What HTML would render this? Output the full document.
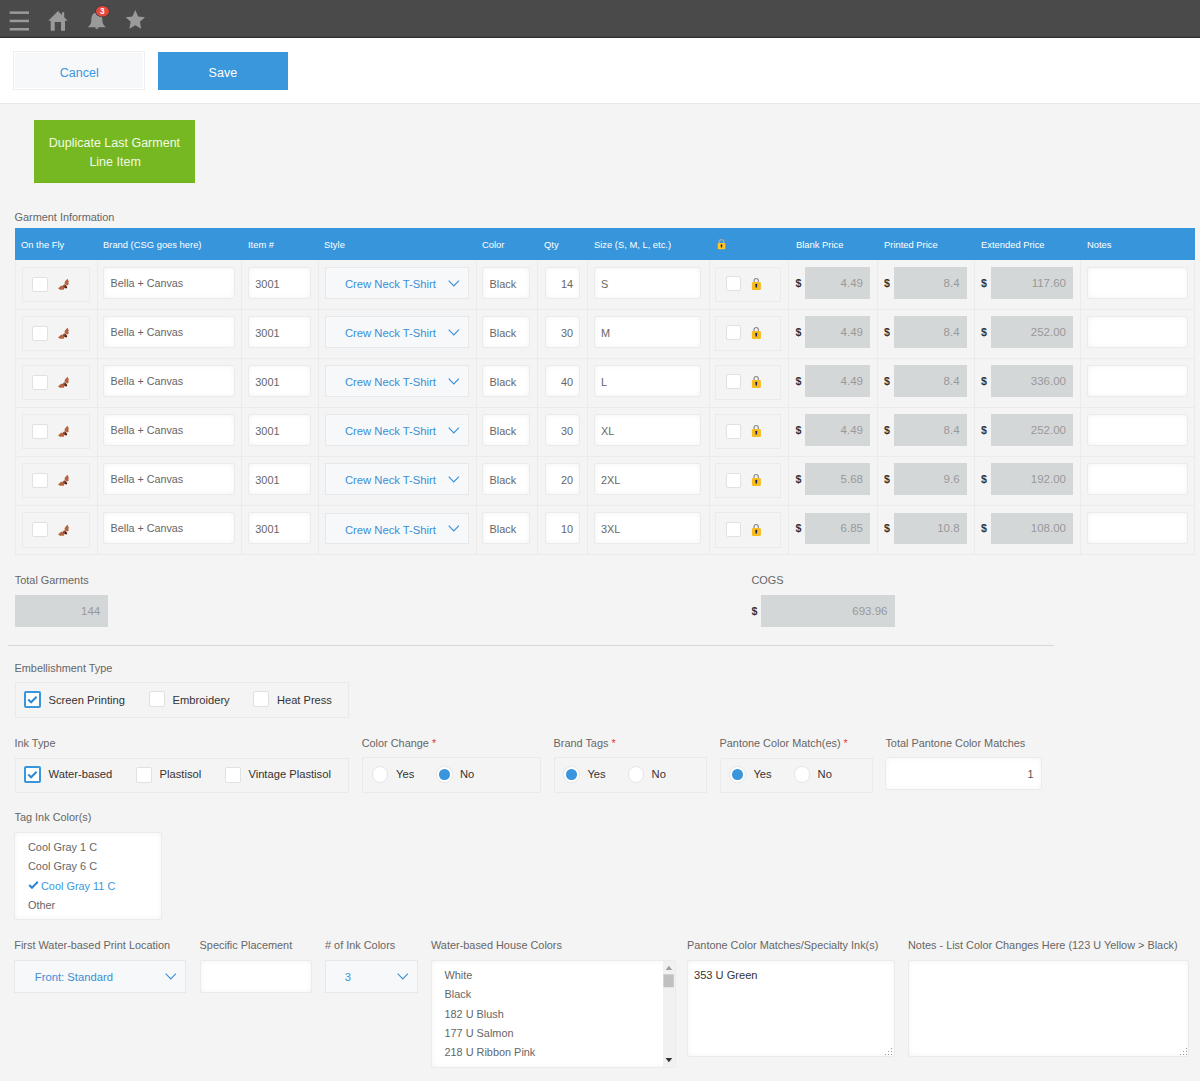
<!DOCTYPE html>
<html><head><meta charset="utf-8">
<style>
*{box-sizing:border-box;margin:0;padding:0}
html,body{width:1200px;height:1081px;overflow:hidden}
body{background:#f4f4f4;font-family:"Liberation Sans",sans-serif;color:#666;position:relative}
div,svg{position:absolute}
.t{white-space:nowrap}
.inp{background:#fff;border:1px solid #ebebeb;border-radius:2px;box-shadow:inset 0 0 5px rgba(0,0,0,.055)}
.ro{background:#d4d7d8}
.sel{background:#f6f8fa;border:1px solid #e6e9ec}
.otf{border:1px solid #ebebeb}
.cb{background:#fff;border:1px solid #dfe1e3;border-radius:2px}
.grp{border:1px solid #eaeaea}
.vl{background:#ebebeb}
.rd{border-radius:50%;background:#fff;border:1px solid #e6e6e6}
.dot{border-radius:50%;background:#3a96dc}
</style></head><body>
<div class="" style="left:0px;top:0px;width:1200px;height:38px;background:#4a4a4a"></div>
<div class="" style="left:0px;top:36px;width:1200px;height:1px;background:#434343"></div>
<div class="" style="left:0px;top:37px;width:1200px;height:1px;background:#2e2e2e"></div>
<svg style="left:0;top:0" width="160" height="38" viewBox="0 0 160 38">
  <g fill="#9a9a9a">
   <rect x="9.7" y="11.4" width="19.3" height="2.5"/>
   <rect x="9.7" y="19.7" width="19.3" height="2.5"/>
   <rect x="9.7" y="28" width="19.3" height="2.5"/>
   <path d="M48.3 20.8 L58 11 L62 15 L62 12.3 L64.2 12.3 L64.2 17.3 L67.7 20.8 L65 20.8 L65 30.7 L61 30.7 L61 22 L54.7 22 L54.7 30.7 L50.7 30.7 L50.7 20.8 Z"/>
   <path d="M96.8 12.6 C92 12.6 91.3 17.5 91.3 20.5 C91.3 23.5 90 25 87.8 27.2 L105.9 27.2 C103.7 25 102.4 23.5 102.4 20.5 C102.4 17.5 101.6 12.6 96.8 12.6 Z"/>
   <path d="M94.8 27.2 L98.8 27.2 Q96.8 31 94.8 27.2 Z"/>
   <path d="M135.3 10 L138.2 16.5 L145 17.2 L139.9 21.8 L141.3 28.8 L135.3 25.3 L129.3 28.8 L130.7 21.8 L125.7 17.2 L132.4 16.5 Z"/>
  </g>
  <ellipse cx="102.5" cy="11.2" rx="7.4" ry="6.1" fill="#3f3f3f"/><ellipse cx="102.5" cy="11.2" rx="6.5" ry="5.2" fill="#e8473a"/>
  <text x="102.4" y="14.3" font-family="Liberation Sans" font-weight="bold" font-size="8.3" fill="#fff" text-anchor="middle">3</text>
</svg>
<div class="" style="left:0px;top:38px;width:1200px;height:65px;background:#fff"></div>
<div class="" style="left:0px;top:103px;width:1200px;height:1px;background:#e8e8e8"></div>
<div class="" style="left:13px;top:51px;width:132px;height:39px;background:#f6f8fa;border:1px solid #eceef0;box-shadow:inset 0 0 0 1px #fff"></div>
<div class="t" style="left:59.75px;top:65.04px;font-size:12.5px;line-height:16.25px;color:#3a96dc;">Cancel</div>
<div class="" style="left:158px;top:52px;width:130px;height:38px;background:#3a97dc"></div>
<div class="t" style="left:208.6px;top:65.04px;font-size:12.5px;line-height:16.25px;color:#fff;">Save</div>
<div class="" style="left:34px;top:120px;width:161px;height:63px;background:#76b821;border-bottom:1px solid #6db516"></div>
<div class="t" style="left:48.75px;top:135.14px;font-size:12.5px;line-height:16.25px;color:#f3fae4;">Duplicate Last Garment</div>
<div class="t" style="left:89.4px;top:154.44px;font-size:12.5px;line-height:16.25px;color:#f3fae4;">Line Item</div>
<div class="t" style="left:14.5px;top:209.74px;font-size:10.9px;line-height:14.17px;color:#666;">Garment Information</div>
<div class="" style="left:14.5px;top:228px;width:1180.5px;height:32px;background:#3796db"></div>
<div class="t" style="left:21px;top:238.73px;font-size:9.4px;line-height:12.22px;color:#fff;">On the Fly</div>
<div class="t" style="left:103px;top:238.73px;font-size:9.4px;line-height:12.22px;color:#fff;">Brand (CSG goes here)</div>
<div class="t" style="left:248px;top:238.73px;font-size:9.4px;line-height:12.22px;color:#fff;">Item #</div>
<div class="t" style="left:324px;top:238.73px;font-size:9.4px;line-height:12.22px;color:#fff;">Style</div>
<div class="t" style="left:482px;top:238.73px;font-size:9.4px;line-height:12.22px;color:#fff;">Color</div>
<div class="t" style="left:544px;top:238.73px;font-size:9.4px;line-height:12.22px;color:#fff;">Qty</div>
<div class="t" style="left:594px;top:238.73px;font-size:9.4px;line-height:12.22px;color:#fff;">Size (S, M, L, etc.)</div>
<div class="t" style="left:796px;top:238.73px;font-size:9.4px;line-height:12.22px;color:#fff;">Blank Price</div>
<div class="t" style="left:884px;top:238.73px;font-size:9.4px;line-height:12.22px;color:#fff;">Printed Price</div>
<div class="t" style="left:981px;top:238.73px;font-size:9.4px;line-height:12.22px;color:#fff;">Extended Price</div>
<div class="t" style="left:1087px;top:238.73px;font-size:9.4px;line-height:12.22px;color:#fff;">Notes</div>
<svg style="left:716px;top:238px" width="11" height="13" viewBox="0 0 11 13"><path d="M3.2 5.5 V3.9 a2.3 2.3 0 0 1 4.6 0 V5.5" fill="none" stroke="#a8a8a8" stroke-width="1.3"/><rect x="1.7" y="4.9" width="7.6" height="6.3" rx="0.9" fill="#ffc425"/><path d="M5.5 6.3 a0.9 0.9 0 0 1 0.6 1.6 L6.2 9.5 H4.8 L4.9 7.9 a0.9 0.9 0 0 1 0.6 -1.6Z" fill="#1c2060"/></svg>
<div class="vl" style="left:14.5px;top:308.6px;width:1180.5px;height:1.0px;"></div>
<div class="vl" style="left:14.5px;top:260.0px;width:1.0px;height:49.10000000000002px;"></div>
<div class="vl" style="left:1194px;top:260.0px;width:1px;height:49.10000000000002px;"></div>
<div class="vl" style="left:96.5px;top:260.0px;width:1.0px;height:49.10000000000002px;"></div>
<div class="vl" style="left:240.5px;top:260.0px;width:1.0px;height:49.10000000000002px;"></div>
<div class="vl" style="left:318.0px;top:260.0px;width:1.0px;height:49.10000000000002px;"></div>
<div class="vl" style="left:475.5px;top:260.0px;width:1.0px;height:49.10000000000002px;"></div>
<div class="vl" style="left:537.0px;top:260.0px;width:1.0px;height:49.10000000000002px;"></div>
<div class="vl" style="left:587.0px;top:260.0px;width:1.0px;height:49.10000000000002px;"></div>
<div class="vl" style="left:708.5px;top:260.0px;width:1.0px;height:49.10000000000002px;"></div>
<div class="vl" style="left:788.0px;top:260.0px;width:1.0px;height:49.10000000000002px;"></div>
<div class="vl" style="left:876.5px;top:260.0px;width:1.0px;height:49.10000000000002px;"></div>
<div class="vl" style="left:974.0px;top:260.0px;width:1.0px;height:49.10000000000002px;"></div>
<div class="vl" style="left:1080.0px;top:260.0px;width:1.0px;height:49.10000000000002px;"></div>
<div class="otf" style="left:22px;top:266.5px;width:67.5px;height:35.5px;"></div>
<div class="cb" style="left:32.3px;top:276.5px;width:15.300000000000004px;height:15.199999999999989px;"></div>
<svg style="left:50px;top:272.0px" width="25" height="23" viewBox="0 0 25 23"><g fill="#b5643f"><path d="M8.1 16.7 C9 15.6 10.6 14 12 13.6 L14.6 15 C14.5 16.2 14 17.3 13.5 17.9 L12 17.6 L10.3 17.9 L9.4 17.3 Z"/><path d="M14.6 10.2 C15.4 9 16.5 7.6 17.5 6.8 L18.2 8.3 L18.8 9.4 L18.4 10.8 L18.7 12.6 L17.2 13.6 L14.8 12.3 Z"/></g><ellipse cx="15.2" cy="14.5" rx="2.4" ry="1.3" transform="rotate(42 15.2 14.5)" fill="#5a1a06"/><circle cx="14.6" cy="13.9" r="0.7" fill="#b06a5a"/></svg>
<div class="inp" style="left:103px;top:266.5px;width:131.5px;height:32.0px;"></div>
<div class="t" style="left:110.6px;top:276.69px;font-size:10.75px;line-height:13.97px;color:#666;">Bella + Canvas</div>
<div class="inp" style="left:248.4px;top:266.5px;width:62.20000000000002px;height:32.0px;"></div>
<div class="t" style="left:255.3px;top:276.54px;font-size:10.9px;line-height:14.17px;color:#666;">3001</div>
<div class="sel" style="left:325px;top:267.0px;width:144px;height:31.5px;"></div>
<div class="t" style="left:344.9px;top:277.09px;font-size:11.25px;line-height:14.62px;color:#3a8fd6;">Crew Neck T-Shirt</div>
<svg style="left:447.5px;top:279.5px" width="12" height="7" viewBox="0 0 12 7"><path d="M0.7 0.6 L5.8 5.9 L10.9 0.6" fill="none" stroke="#3a8fd6" stroke-width="1.1"/></svg>
<div class="inp" style="left:482.4px;top:266.5px;width:48.0px;height:32.0px;"></div>
<div class="t" style="left:489.5px;top:276.54px;font-size:10.9px;line-height:14.17px;color:#666;">Black</div>
<div class="inp" style="left:544.5px;top:266.5px;width:35.5px;height:32.0px;"></div>
<div class="t" style="right:627px;top:276.54px;font-size:10.9px;line-height:14.17px;color:#666;text-align:right;">14</div>
<div class="inp" style="left:594px;top:266.5px;width:107px;height:32.0px;"></div>
<div class="t" style="left:601px;top:276.54px;font-size:10.9px;line-height:14.17px;color:#666;">S</div>
<div class="otf" style="left:714.5px;top:266.5px;width:66.5px;height:35.5px;"></div>
<div class="cb" style="left:725.5px;top:276.2px;width:15.0px;height:15.0px;"></div>
<svg style="left:750px;top:277.0px" width="12" height="14" viewBox="0 0 12 14"><path d="M4.1 5.5 V3.6 a2.1 2.1 0 0 1 4.2 0 V5.5" fill="none" stroke="#8a8a8a" stroke-width="1.2"/><rect x="1.9" y="5" width="9" height="7.9" rx="1.2" fill="#f7bd1e"/><path d="M6.3 6.8 a1 1 0 0 1 0.7 1.8 L7.1 10.6 H5.5 L5.6 8.6 a1 1 0 0 1 0.7 -1.8Z" fill="#1c2060"/></svg>
<div class="t" style="left:795.6px;top:276.84px;font-size:10.6px;line-height:13.78px;color:#333;font-weight:bold">$</div>
<div class="ro" style="left:805px;top:267.0px;width:65px;height:31.5px;"></div>
<div class="t" style="right:337px;top:275.64px;font-size:11.5px;line-height:14.95px;color:#999;text-align:right;">4.49</div>
<div class="t" style="left:884px;top:276.84px;font-size:10.6px;line-height:13.78px;color:#333;font-weight:bold">$</div>
<div class="ro" style="left:894px;top:267.0px;width:72.60000000000002px;height:31.5px;"></div>
<div class="t" style="right:240.39999999999998px;top:275.64px;font-size:11.5px;line-height:14.95px;color:#999;text-align:right;">8.4</div>
<div class="t" style="left:981px;top:276.84px;font-size:10.6px;line-height:13.78px;color:#333;font-weight:bold">$</div>
<div class="ro" style="left:990.5px;top:267.0px;width:82.5px;height:31.5px;"></div>
<div class="t" style="right:134px;top:275.64px;font-size:11.5px;line-height:14.95px;color:#999;text-align:right;">117.60</div>
<div class="inp" style="left:1087px;top:266.5px;width:101px;height:32.0px;"></div>
<div class="vl" style="left:14.5px;top:357.70000000000005px;width:1180.5px;height:1.0px;"></div>
<div class="vl" style="left:14.5px;top:309.1px;width:1.0px;height:49.10000000000002px;"></div>
<div class="vl" style="left:1194px;top:309.1px;width:1px;height:49.10000000000002px;"></div>
<div class="vl" style="left:96.5px;top:309.1px;width:1.0px;height:49.10000000000002px;"></div>
<div class="vl" style="left:240.5px;top:309.1px;width:1.0px;height:49.10000000000002px;"></div>
<div class="vl" style="left:318.0px;top:309.1px;width:1.0px;height:49.10000000000002px;"></div>
<div class="vl" style="left:475.5px;top:309.1px;width:1.0px;height:49.10000000000002px;"></div>
<div class="vl" style="left:537.0px;top:309.1px;width:1.0px;height:49.10000000000002px;"></div>
<div class="vl" style="left:587.0px;top:309.1px;width:1.0px;height:49.10000000000002px;"></div>
<div class="vl" style="left:708.5px;top:309.1px;width:1.0px;height:49.10000000000002px;"></div>
<div class="vl" style="left:788.0px;top:309.1px;width:1.0px;height:49.10000000000002px;"></div>
<div class="vl" style="left:876.5px;top:309.1px;width:1.0px;height:49.10000000000002px;"></div>
<div class="vl" style="left:974.0px;top:309.1px;width:1.0px;height:49.10000000000002px;"></div>
<div class="vl" style="left:1080.0px;top:309.1px;width:1.0px;height:49.10000000000002px;"></div>
<div class="otf" style="left:22px;top:315.6px;width:67.5px;height:35.5px;"></div>
<div class="cb" style="left:32.3px;top:325.6px;width:15.300000000000004px;height:15.199999999999989px;"></div>
<svg style="left:50px;top:321.1px" width="25" height="23" viewBox="0 0 25 23"><g fill="#b5643f"><path d="M8.1 16.7 C9 15.6 10.6 14 12 13.6 L14.6 15 C14.5 16.2 14 17.3 13.5 17.9 L12 17.6 L10.3 17.9 L9.4 17.3 Z"/><path d="M14.6 10.2 C15.4 9 16.5 7.6 17.5 6.8 L18.2 8.3 L18.8 9.4 L18.4 10.8 L18.7 12.6 L17.2 13.6 L14.8 12.3 Z"/></g><ellipse cx="15.2" cy="14.5" rx="2.4" ry="1.3" transform="rotate(42 15.2 14.5)" fill="#5a1a06"/><circle cx="14.6" cy="13.9" r="0.7" fill="#b06a5a"/></svg>
<div class="inp" style="left:103px;top:315.6px;width:131.5px;height:32.0px;"></div>
<div class="t" style="left:110.6px;top:325.79px;font-size:10.75px;line-height:13.97px;color:#666;">Bella + Canvas</div>
<div class="inp" style="left:248.4px;top:315.6px;width:62.20000000000002px;height:32.0px;"></div>
<div class="t" style="left:255.3px;top:325.64px;font-size:10.9px;line-height:14.17px;color:#666;">3001</div>
<div class="sel" style="left:325px;top:316.1px;width:144px;height:31.5px;"></div>
<div class="t" style="left:344.9px;top:326.19px;font-size:11.25px;line-height:14.62px;color:#3a8fd6;">Crew Neck T-Shirt</div>
<svg style="left:447.5px;top:328.6px" width="12" height="7" viewBox="0 0 12 7"><path d="M0.7 0.6 L5.8 5.9 L10.9 0.6" fill="none" stroke="#3a8fd6" stroke-width="1.1"/></svg>
<div class="inp" style="left:482.4px;top:315.6px;width:48.0px;height:32.0px;"></div>
<div class="t" style="left:489.5px;top:325.64px;font-size:10.9px;line-height:14.17px;color:#666;">Black</div>
<div class="inp" style="left:544.5px;top:315.6px;width:35.5px;height:32.0px;"></div>
<div class="t" style="right:627px;top:325.64px;font-size:10.9px;line-height:14.17px;color:#666;text-align:right;">30</div>
<div class="inp" style="left:594px;top:315.6px;width:107px;height:32.0px;"></div>
<div class="t" style="left:601px;top:325.64px;font-size:10.9px;line-height:14.17px;color:#666;">M</div>
<div class="otf" style="left:714.5px;top:315.6px;width:66.5px;height:35.5px;"></div>
<div class="cb" style="left:725.5px;top:325.3px;width:15.0px;height:15.0px;"></div>
<svg style="left:750px;top:326.1px" width="12" height="14" viewBox="0 0 12 14"><path d="M4.1 5.5 V3.6 a2.1 2.1 0 0 1 4.2 0 V5.5" fill="none" stroke="#8a8a8a" stroke-width="1.2"/><rect x="1.9" y="5" width="9" height="7.9" rx="1.2" fill="#f7bd1e"/><path d="M6.3 6.8 a1 1 0 0 1 0.7 1.8 L7.1 10.6 H5.5 L5.6 8.6 a1 1 0 0 1 0.7 -1.8Z" fill="#1c2060"/></svg>
<div class="t" style="left:795.6px;top:325.94px;font-size:10.6px;line-height:13.78px;color:#333;font-weight:bold">$</div>
<div class="ro" style="left:805px;top:316.1px;width:65px;height:31.5px;"></div>
<div class="t" style="right:337px;top:324.74px;font-size:11.5px;line-height:14.95px;color:#999;text-align:right;">4.49</div>
<div class="t" style="left:884px;top:325.94px;font-size:10.6px;line-height:13.78px;color:#333;font-weight:bold">$</div>
<div class="ro" style="left:894px;top:316.1px;width:72.60000000000002px;height:31.5px;"></div>
<div class="t" style="right:240.39999999999998px;top:324.74px;font-size:11.5px;line-height:14.95px;color:#999;text-align:right;">8.4</div>
<div class="t" style="left:981px;top:325.94px;font-size:10.6px;line-height:13.78px;color:#333;font-weight:bold">$</div>
<div class="ro" style="left:990.5px;top:316.1px;width:82.5px;height:31.5px;"></div>
<div class="t" style="right:134px;top:324.74px;font-size:11.5px;line-height:14.95px;color:#999;text-align:right;">252.00</div>
<div class="inp" style="left:1087px;top:315.6px;width:101px;height:32.0px;"></div>
<div class="vl" style="left:14.5px;top:406.8px;width:1180.5px;height:1.0px;"></div>
<div class="vl" style="left:14.5px;top:358.2px;width:1.0px;height:49.10000000000002px;"></div>
<div class="vl" style="left:1194px;top:358.2px;width:1px;height:49.10000000000002px;"></div>
<div class="vl" style="left:96.5px;top:358.2px;width:1.0px;height:49.10000000000002px;"></div>
<div class="vl" style="left:240.5px;top:358.2px;width:1.0px;height:49.10000000000002px;"></div>
<div class="vl" style="left:318.0px;top:358.2px;width:1.0px;height:49.10000000000002px;"></div>
<div class="vl" style="left:475.5px;top:358.2px;width:1.0px;height:49.10000000000002px;"></div>
<div class="vl" style="left:537.0px;top:358.2px;width:1.0px;height:49.10000000000002px;"></div>
<div class="vl" style="left:587.0px;top:358.2px;width:1.0px;height:49.10000000000002px;"></div>
<div class="vl" style="left:708.5px;top:358.2px;width:1.0px;height:49.10000000000002px;"></div>
<div class="vl" style="left:788.0px;top:358.2px;width:1.0px;height:49.10000000000002px;"></div>
<div class="vl" style="left:876.5px;top:358.2px;width:1.0px;height:49.10000000000002px;"></div>
<div class="vl" style="left:974.0px;top:358.2px;width:1.0px;height:49.10000000000002px;"></div>
<div class="vl" style="left:1080.0px;top:358.2px;width:1.0px;height:49.10000000000002px;"></div>
<div class="otf" style="left:22px;top:364.7px;width:67.5px;height:35.5px;"></div>
<div class="cb" style="left:32.3px;top:374.7px;width:15.300000000000004px;height:15.199999999999989px;"></div>
<svg style="left:50px;top:370.2px" width="25" height="23" viewBox="0 0 25 23"><g fill="#b5643f"><path d="M8.1 16.7 C9 15.6 10.6 14 12 13.6 L14.6 15 C14.5 16.2 14 17.3 13.5 17.9 L12 17.6 L10.3 17.9 L9.4 17.3 Z"/><path d="M14.6 10.2 C15.4 9 16.5 7.6 17.5 6.8 L18.2 8.3 L18.8 9.4 L18.4 10.8 L18.7 12.6 L17.2 13.6 L14.8 12.3 Z"/></g><ellipse cx="15.2" cy="14.5" rx="2.4" ry="1.3" transform="rotate(42 15.2 14.5)" fill="#5a1a06"/><circle cx="14.6" cy="13.9" r="0.7" fill="#b06a5a"/></svg>
<div class="inp" style="left:103px;top:364.7px;width:131.5px;height:32.0px;"></div>
<div class="t" style="left:110.6px;top:374.89px;font-size:10.75px;line-height:13.97px;color:#666;">Bella + Canvas</div>
<div class="inp" style="left:248.4px;top:364.7px;width:62.20000000000002px;height:32.0px;"></div>
<div class="t" style="left:255.3px;top:374.74px;font-size:10.9px;line-height:14.17px;color:#666;">3001</div>
<div class="sel" style="left:325px;top:365.2px;width:144px;height:31.5px;"></div>
<div class="t" style="left:344.9px;top:375.29px;font-size:11.25px;line-height:14.62px;color:#3a8fd6;">Crew Neck T-Shirt</div>
<svg style="left:447.5px;top:377.7px" width="12" height="7" viewBox="0 0 12 7"><path d="M0.7 0.6 L5.8 5.9 L10.9 0.6" fill="none" stroke="#3a8fd6" stroke-width="1.1"/></svg>
<div class="inp" style="left:482.4px;top:364.7px;width:48.0px;height:32.0px;"></div>
<div class="t" style="left:489.5px;top:374.74px;font-size:10.9px;line-height:14.17px;color:#666;">Black</div>
<div class="inp" style="left:544.5px;top:364.7px;width:35.5px;height:32.0px;"></div>
<div class="t" style="right:627px;top:374.74px;font-size:10.9px;line-height:14.17px;color:#666;text-align:right;">40</div>
<div class="inp" style="left:594px;top:364.7px;width:107px;height:32.0px;"></div>
<div class="t" style="left:601px;top:374.74px;font-size:10.9px;line-height:14.17px;color:#666;">L</div>
<div class="otf" style="left:714.5px;top:364.7px;width:66.5px;height:35.5px;"></div>
<div class="cb" style="left:725.5px;top:374.4px;width:15.0px;height:15.0px;"></div>
<svg style="left:750px;top:375.2px" width="12" height="14" viewBox="0 0 12 14"><path d="M4.1 5.5 V3.6 a2.1 2.1 0 0 1 4.2 0 V5.5" fill="none" stroke="#8a8a8a" stroke-width="1.2"/><rect x="1.9" y="5" width="9" height="7.9" rx="1.2" fill="#f7bd1e"/><path d="M6.3 6.8 a1 1 0 0 1 0.7 1.8 L7.1 10.6 H5.5 L5.6 8.6 a1 1 0 0 1 0.7 -1.8Z" fill="#1c2060"/></svg>
<div class="t" style="left:795.6px;top:375.04px;font-size:10.6px;line-height:13.78px;color:#333;font-weight:bold">$</div>
<div class="ro" style="left:805px;top:365.2px;width:65px;height:31.5px;"></div>
<div class="t" style="right:337px;top:373.84px;font-size:11.5px;line-height:14.95px;color:#999;text-align:right;">4.49</div>
<div class="t" style="left:884px;top:375.04px;font-size:10.6px;line-height:13.78px;color:#333;font-weight:bold">$</div>
<div class="ro" style="left:894px;top:365.2px;width:72.60000000000002px;height:31.5px;"></div>
<div class="t" style="right:240.39999999999998px;top:373.84px;font-size:11.5px;line-height:14.95px;color:#999;text-align:right;">8.4</div>
<div class="t" style="left:981px;top:375.04px;font-size:10.6px;line-height:13.78px;color:#333;font-weight:bold">$</div>
<div class="ro" style="left:990.5px;top:365.2px;width:82.5px;height:31.5px;"></div>
<div class="t" style="right:134px;top:373.84px;font-size:11.5px;line-height:14.95px;color:#999;text-align:right;">336.00</div>
<div class="inp" style="left:1087px;top:364.7px;width:101px;height:32.0px;"></div>
<div class="vl" style="left:14.5px;top:455.90000000000003px;width:1180.5px;height:1.0px;"></div>
<div class="vl" style="left:14.5px;top:407.3px;width:1.0px;height:49.10000000000002px;"></div>
<div class="vl" style="left:1194px;top:407.3px;width:1px;height:49.10000000000002px;"></div>
<div class="vl" style="left:96.5px;top:407.3px;width:1.0px;height:49.10000000000002px;"></div>
<div class="vl" style="left:240.5px;top:407.3px;width:1.0px;height:49.10000000000002px;"></div>
<div class="vl" style="left:318.0px;top:407.3px;width:1.0px;height:49.10000000000002px;"></div>
<div class="vl" style="left:475.5px;top:407.3px;width:1.0px;height:49.10000000000002px;"></div>
<div class="vl" style="left:537.0px;top:407.3px;width:1.0px;height:49.10000000000002px;"></div>
<div class="vl" style="left:587.0px;top:407.3px;width:1.0px;height:49.10000000000002px;"></div>
<div class="vl" style="left:708.5px;top:407.3px;width:1.0px;height:49.10000000000002px;"></div>
<div class="vl" style="left:788.0px;top:407.3px;width:1.0px;height:49.10000000000002px;"></div>
<div class="vl" style="left:876.5px;top:407.3px;width:1.0px;height:49.10000000000002px;"></div>
<div class="vl" style="left:974.0px;top:407.3px;width:1.0px;height:49.10000000000002px;"></div>
<div class="vl" style="left:1080.0px;top:407.3px;width:1.0px;height:49.10000000000002px;"></div>
<div class="otf" style="left:22px;top:413.8px;width:67.5px;height:35.5px;"></div>
<div class="cb" style="left:32.3px;top:423.8px;width:15.300000000000004px;height:15.199999999999989px;"></div>
<svg style="left:50px;top:419.3px" width="25" height="23" viewBox="0 0 25 23"><g fill="#b5643f"><path d="M8.1 16.7 C9 15.6 10.6 14 12 13.6 L14.6 15 C14.5 16.2 14 17.3 13.5 17.9 L12 17.6 L10.3 17.9 L9.4 17.3 Z"/><path d="M14.6 10.2 C15.4 9 16.5 7.6 17.5 6.8 L18.2 8.3 L18.8 9.4 L18.4 10.8 L18.7 12.6 L17.2 13.6 L14.8 12.3 Z"/></g><ellipse cx="15.2" cy="14.5" rx="2.4" ry="1.3" transform="rotate(42 15.2 14.5)" fill="#5a1a06"/><circle cx="14.6" cy="13.9" r="0.7" fill="#b06a5a"/></svg>
<div class="inp" style="left:103px;top:413.8px;width:131.5px;height:32.0px;"></div>
<div class="t" style="left:110.6px;top:423.99px;font-size:10.75px;line-height:13.97px;color:#666;">Bella + Canvas</div>
<div class="inp" style="left:248.4px;top:413.8px;width:62.20000000000002px;height:32.0px;"></div>
<div class="t" style="left:255.3px;top:423.84px;font-size:10.9px;line-height:14.17px;color:#666;">3001</div>
<div class="sel" style="left:325px;top:414.3px;width:144px;height:31.5px;"></div>
<div class="t" style="left:344.9px;top:424.39px;font-size:11.25px;line-height:14.62px;color:#3a8fd6;">Crew Neck T-Shirt</div>
<svg style="left:447.5px;top:426.8px" width="12" height="7" viewBox="0 0 12 7"><path d="M0.7 0.6 L5.8 5.9 L10.9 0.6" fill="none" stroke="#3a8fd6" stroke-width="1.1"/></svg>
<div class="inp" style="left:482.4px;top:413.8px;width:48.0px;height:32.0px;"></div>
<div class="t" style="left:489.5px;top:423.84px;font-size:10.9px;line-height:14.17px;color:#666;">Black</div>
<div class="inp" style="left:544.5px;top:413.8px;width:35.5px;height:32.0px;"></div>
<div class="t" style="right:627px;top:423.84px;font-size:10.9px;line-height:14.17px;color:#666;text-align:right;">30</div>
<div class="inp" style="left:594px;top:413.8px;width:107px;height:32.0px;"></div>
<div class="t" style="left:601px;top:423.84px;font-size:10.9px;line-height:14.17px;color:#666;">XL</div>
<div class="otf" style="left:714.5px;top:413.8px;width:66.5px;height:35.5px;"></div>
<div class="cb" style="left:725.5px;top:423.5px;width:15.0px;height:15.0px;"></div>
<svg style="left:750px;top:424.3px" width="12" height="14" viewBox="0 0 12 14"><path d="M4.1 5.5 V3.6 a2.1 2.1 0 0 1 4.2 0 V5.5" fill="none" stroke="#8a8a8a" stroke-width="1.2"/><rect x="1.9" y="5" width="9" height="7.9" rx="1.2" fill="#f7bd1e"/><path d="M6.3 6.8 a1 1 0 0 1 0.7 1.8 L7.1 10.6 H5.5 L5.6 8.6 a1 1 0 0 1 0.7 -1.8Z" fill="#1c2060"/></svg>
<div class="t" style="left:795.6px;top:424.14px;font-size:10.6px;line-height:13.78px;color:#333;font-weight:bold">$</div>
<div class="ro" style="left:805px;top:414.3px;width:65px;height:31.5px;"></div>
<div class="t" style="right:337px;top:422.94px;font-size:11.5px;line-height:14.95px;color:#999;text-align:right;">4.49</div>
<div class="t" style="left:884px;top:424.14px;font-size:10.6px;line-height:13.78px;color:#333;font-weight:bold">$</div>
<div class="ro" style="left:894px;top:414.3px;width:72.60000000000002px;height:31.5px;"></div>
<div class="t" style="right:240.39999999999998px;top:422.94px;font-size:11.5px;line-height:14.95px;color:#999;text-align:right;">8.4</div>
<div class="t" style="left:981px;top:424.14px;font-size:10.6px;line-height:13.78px;color:#333;font-weight:bold">$</div>
<div class="ro" style="left:990.5px;top:414.3px;width:82.5px;height:31.5px;"></div>
<div class="t" style="right:134px;top:422.94px;font-size:11.5px;line-height:14.95px;color:#999;text-align:right;">252.00</div>
<div class="inp" style="left:1087px;top:413.8px;width:101px;height:32.0px;"></div>
<div class="vl" style="left:14.5px;top:505.0px;width:1180.5px;height:1.0px;"></div>
<div class="vl" style="left:14.5px;top:456.4px;width:1.0px;height:49.10000000000002px;"></div>
<div class="vl" style="left:1194px;top:456.4px;width:1px;height:49.10000000000002px;"></div>
<div class="vl" style="left:96.5px;top:456.4px;width:1.0px;height:49.10000000000002px;"></div>
<div class="vl" style="left:240.5px;top:456.4px;width:1.0px;height:49.10000000000002px;"></div>
<div class="vl" style="left:318.0px;top:456.4px;width:1.0px;height:49.10000000000002px;"></div>
<div class="vl" style="left:475.5px;top:456.4px;width:1.0px;height:49.10000000000002px;"></div>
<div class="vl" style="left:537.0px;top:456.4px;width:1.0px;height:49.10000000000002px;"></div>
<div class="vl" style="left:587.0px;top:456.4px;width:1.0px;height:49.10000000000002px;"></div>
<div class="vl" style="left:708.5px;top:456.4px;width:1.0px;height:49.10000000000002px;"></div>
<div class="vl" style="left:788.0px;top:456.4px;width:1.0px;height:49.10000000000002px;"></div>
<div class="vl" style="left:876.5px;top:456.4px;width:1.0px;height:49.10000000000002px;"></div>
<div class="vl" style="left:974.0px;top:456.4px;width:1.0px;height:49.10000000000002px;"></div>
<div class="vl" style="left:1080.0px;top:456.4px;width:1.0px;height:49.10000000000002px;"></div>
<div class="otf" style="left:22px;top:462.9px;width:67.5px;height:35.5px;"></div>
<div class="cb" style="left:32.3px;top:472.9px;width:15.300000000000004px;height:15.199999999999989px;"></div>
<svg style="left:50px;top:468.4px" width="25" height="23" viewBox="0 0 25 23"><g fill="#b5643f"><path d="M8.1 16.7 C9 15.6 10.6 14 12 13.6 L14.6 15 C14.5 16.2 14 17.3 13.5 17.9 L12 17.6 L10.3 17.9 L9.4 17.3 Z"/><path d="M14.6 10.2 C15.4 9 16.5 7.6 17.5 6.8 L18.2 8.3 L18.8 9.4 L18.4 10.8 L18.7 12.6 L17.2 13.6 L14.8 12.3 Z"/></g><ellipse cx="15.2" cy="14.5" rx="2.4" ry="1.3" transform="rotate(42 15.2 14.5)" fill="#5a1a06"/><circle cx="14.6" cy="13.9" r="0.7" fill="#b06a5a"/></svg>
<div class="inp" style="left:103px;top:462.9px;width:131.5px;height:32.0px;"></div>
<div class="t" style="left:110.6px;top:473.09px;font-size:10.75px;line-height:13.97px;color:#666;">Bella + Canvas</div>
<div class="inp" style="left:248.4px;top:462.9px;width:62.20000000000002px;height:32.0px;"></div>
<div class="t" style="left:255.3px;top:472.94px;font-size:10.9px;line-height:14.17px;color:#666;">3001</div>
<div class="sel" style="left:325px;top:463.4px;width:144px;height:31.5px;"></div>
<div class="t" style="left:344.9px;top:473.49px;font-size:11.25px;line-height:14.62px;color:#3a8fd6;">Crew Neck T-Shirt</div>
<svg style="left:447.5px;top:475.9px" width="12" height="7" viewBox="0 0 12 7"><path d="M0.7 0.6 L5.8 5.9 L10.9 0.6" fill="none" stroke="#3a8fd6" stroke-width="1.1"/></svg>
<div class="inp" style="left:482.4px;top:462.9px;width:48.0px;height:32.0px;"></div>
<div class="t" style="left:489.5px;top:472.94px;font-size:10.9px;line-height:14.17px;color:#666;">Black</div>
<div class="inp" style="left:544.5px;top:462.9px;width:35.5px;height:32.0px;"></div>
<div class="t" style="right:627px;top:472.94px;font-size:10.9px;line-height:14.17px;color:#666;text-align:right;">20</div>
<div class="inp" style="left:594px;top:462.9px;width:107px;height:32.0px;"></div>
<div class="t" style="left:601px;top:472.94px;font-size:10.9px;line-height:14.17px;color:#666;">2XL</div>
<div class="otf" style="left:714.5px;top:462.9px;width:66.5px;height:35.5px;"></div>
<div class="cb" style="left:725.5px;top:472.59999999999997px;width:15.0px;height:15.0px;"></div>
<svg style="left:750px;top:473.4px" width="12" height="14" viewBox="0 0 12 14"><path d="M4.1 5.5 V3.6 a2.1 2.1 0 0 1 4.2 0 V5.5" fill="none" stroke="#8a8a8a" stroke-width="1.2"/><rect x="1.9" y="5" width="9" height="7.9" rx="1.2" fill="#f7bd1e"/><path d="M6.3 6.8 a1 1 0 0 1 0.7 1.8 L7.1 10.6 H5.5 L5.6 8.6 a1 1 0 0 1 0.7 -1.8Z" fill="#1c2060"/></svg>
<div class="t" style="left:795.6px;top:473.24px;font-size:10.6px;line-height:13.78px;color:#333;font-weight:bold">$</div>
<div class="ro" style="left:805px;top:463.4px;width:65px;height:31.5px;"></div>
<div class="t" style="right:337px;top:472.04px;font-size:11.5px;line-height:14.95px;color:#999;text-align:right;">5.68</div>
<div class="t" style="left:884px;top:473.24px;font-size:10.6px;line-height:13.78px;color:#333;font-weight:bold">$</div>
<div class="ro" style="left:894px;top:463.4px;width:72.60000000000002px;height:31.5px;"></div>
<div class="t" style="right:240.39999999999998px;top:472.04px;font-size:11.5px;line-height:14.95px;color:#999;text-align:right;">9.6</div>
<div class="t" style="left:981px;top:473.24px;font-size:10.6px;line-height:13.78px;color:#333;font-weight:bold">$</div>
<div class="ro" style="left:990.5px;top:463.4px;width:82.5px;height:31.5px;"></div>
<div class="t" style="right:134px;top:472.04px;font-size:11.5px;line-height:14.95px;color:#999;text-align:right;">192.00</div>
<div class="inp" style="left:1087px;top:462.9px;width:101px;height:32.0px;"></div>
<div class="vl" style="left:14.5px;top:554.1px;width:1180.5px;height:1.0px;"></div>
<div class="vl" style="left:14.5px;top:505.5px;width:1.0px;height:49.10000000000002px;"></div>
<div class="vl" style="left:1194px;top:505.5px;width:1px;height:49.10000000000002px;"></div>
<div class="vl" style="left:96.5px;top:505.5px;width:1.0px;height:49.10000000000002px;"></div>
<div class="vl" style="left:240.5px;top:505.5px;width:1.0px;height:49.10000000000002px;"></div>
<div class="vl" style="left:318.0px;top:505.5px;width:1.0px;height:49.10000000000002px;"></div>
<div class="vl" style="left:475.5px;top:505.5px;width:1.0px;height:49.10000000000002px;"></div>
<div class="vl" style="left:537.0px;top:505.5px;width:1.0px;height:49.10000000000002px;"></div>
<div class="vl" style="left:587.0px;top:505.5px;width:1.0px;height:49.10000000000002px;"></div>
<div class="vl" style="left:708.5px;top:505.5px;width:1.0px;height:49.10000000000002px;"></div>
<div class="vl" style="left:788.0px;top:505.5px;width:1.0px;height:49.10000000000002px;"></div>
<div class="vl" style="left:876.5px;top:505.5px;width:1.0px;height:49.10000000000002px;"></div>
<div class="vl" style="left:974.0px;top:505.5px;width:1.0px;height:49.10000000000002px;"></div>
<div class="vl" style="left:1080.0px;top:505.5px;width:1.0px;height:49.10000000000002px;"></div>
<div class="otf" style="left:22px;top:512.0px;width:67.5px;height:35.5px;"></div>
<div class="cb" style="left:32.3px;top:522.0px;width:15.300000000000004px;height:15.200000000000045px;"></div>
<svg style="left:50px;top:517.5px" width="25" height="23" viewBox="0 0 25 23"><g fill="#b5643f"><path d="M8.1 16.7 C9 15.6 10.6 14 12 13.6 L14.6 15 C14.5 16.2 14 17.3 13.5 17.9 L12 17.6 L10.3 17.9 L9.4 17.3 Z"/><path d="M14.6 10.2 C15.4 9 16.5 7.6 17.5 6.8 L18.2 8.3 L18.8 9.4 L18.4 10.8 L18.7 12.6 L17.2 13.6 L14.8 12.3 Z"/></g><ellipse cx="15.2" cy="14.5" rx="2.4" ry="1.3" transform="rotate(42 15.2 14.5)" fill="#5a1a06"/><circle cx="14.6" cy="13.9" r="0.7" fill="#b06a5a"/></svg>
<div class="inp" style="left:103px;top:512.0px;width:131.5px;height:32.0px;"></div>
<div class="t" style="left:110.6px;top:522.19px;font-size:10.75px;line-height:13.97px;color:#666;">Bella + Canvas</div>
<div class="inp" style="left:248.4px;top:512.0px;width:62.20000000000002px;height:32.0px;"></div>
<div class="t" style="left:255.3px;top:522.04px;font-size:10.9px;line-height:14.17px;color:#666;">3001</div>
<div class="sel" style="left:325px;top:512.5px;width:144px;height:31.5px;"></div>
<div class="t" style="left:344.9px;top:522.59px;font-size:11.25px;line-height:14.62px;color:#3a8fd6;">Crew Neck T-Shirt</div>
<svg style="left:447.5px;top:525.0px" width="12" height="7" viewBox="0 0 12 7"><path d="M0.7 0.6 L5.8 5.9 L10.9 0.6" fill="none" stroke="#3a8fd6" stroke-width="1.1"/></svg>
<div class="inp" style="left:482.4px;top:512.0px;width:48.0px;height:32.0px;"></div>
<div class="t" style="left:489.5px;top:522.04px;font-size:10.9px;line-height:14.17px;color:#666;">Black</div>
<div class="inp" style="left:544.5px;top:512.0px;width:35.5px;height:32.0px;"></div>
<div class="t" style="right:627px;top:522.04px;font-size:10.9px;line-height:14.17px;color:#666;text-align:right;">10</div>
<div class="inp" style="left:594px;top:512.0px;width:107px;height:32.0px;"></div>
<div class="t" style="left:601px;top:522.04px;font-size:10.9px;line-height:14.17px;color:#666;">3XL</div>
<div class="otf" style="left:714.5px;top:512.0px;width:66.5px;height:35.5px;"></div>
<div class="cb" style="left:725.5px;top:521.7px;width:15.0px;height:15.0px;"></div>
<svg style="left:750px;top:522.5px" width="12" height="14" viewBox="0 0 12 14"><path d="M4.1 5.5 V3.6 a2.1 2.1 0 0 1 4.2 0 V5.5" fill="none" stroke="#8a8a8a" stroke-width="1.2"/><rect x="1.9" y="5" width="9" height="7.9" rx="1.2" fill="#f7bd1e"/><path d="M6.3 6.8 a1 1 0 0 1 0.7 1.8 L7.1 10.6 H5.5 L5.6 8.6 a1 1 0 0 1 0.7 -1.8Z" fill="#1c2060"/></svg>
<div class="t" style="left:795.6px;top:522.34px;font-size:10.6px;line-height:13.78px;color:#333;font-weight:bold">$</div>
<div class="ro" style="left:805px;top:512.5px;width:65px;height:31.5px;"></div>
<div class="t" style="right:337px;top:521.14px;font-size:11.5px;line-height:14.95px;color:#999;text-align:right;">6.85</div>
<div class="t" style="left:884px;top:522.34px;font-size:10.6px;line-height:13.78px;color:#333;font-weight:bold">$</div>
<div class="ro" style="left:894px;top:512.5px;width:72.60000000000002px;height:31.5px;"></div>
<div class="t" style="right:240.39999999999998px;top:521.14px;font-size:11.5px;line-height:14.95px;color:#999;text-align:right;">10.8</div>
<div class="t" style="left:981px;top:522.34px;font-size:10.6px;line-height:13.78px;color:#333;font-weight:bold">$</div>
<div class="ro" style="left:990.5px;top:512.5px;width:82.5px;height:31.5px;"></div>
<div class="t" style="right:134px;top:521.14px;font-size:11.5px;line-height:14.95px;color:#999;text-align:right;">108.00</div>
<div class="inp" style="left:1087px;top:512.0px;width:101px;height:32.0px;"></div>
<div class="t" style="left:14.8px;top:572.84px;font-size:10.9px;line-height:14.17px;color:#666;">Total Garments</div>
<div class="ro" style="left:15px;top:595px;width:92.5px;height:31.5px;"></div>
<div class="t" style="right:1099.8px;top:604.04px;font-size:11.5px;line-height:14.95px;color:#999;text-align:right;">144</div>
<div class="t" style="left:751.5px;top:572.64px;font-size:10.9px;line-height:14.17px;color:#666;">COGS</div>
<div class="t" style="left:751.5px;top:604.94px;font-size:10.6px;line-height:13.78px;color:#333;font-weight:bold">$</div>
<div class="ro" style="left:761px;top:595px;width:134px;height:31.5px;"></div>
<div class="t" style="right:312.5px;top:604.04px;font-size:11.5px;line-height:14.95px;color:#999;text-align:right;">693.96</div>
<div class="" style="left:8px;top:645px;width:1046px;height:1px;background:#d8d8d8"></div>
<div class="t" style="left:14.5px;top:660.64px;font-size:10.9px;line-height:14.17px;color:#666;">Embellishment Type</div>
<div class="grp" style="left:14.5px;top:682px;width:334.5px;height:35.5px;"></div>
<div style="left:24px;top:690.5px;width:17px;height:17px;border:2px solid #3a96dc;border-radius:2px;background:#fff"></div><svg style="left:24px;top:690.5px" width="17" height="17" viewBox="0 0 17 17"><path d="M4.2 8.6 L7.1 11.3 L12.6 5.8" fill="none" stroke="#2f8ad6" stroke-width="2.1"/></svg>
<div class="t" style="left:48.5px;top:692.74px;font-size:11.2px;line-height:14.56px;color:#333;">Screen Printing</div>
<div class="cb" style="left:148.5px;top:691px;width:16.0px;height:16px;"></div>
<div class="t" style="left:172.5px;top:692.74px;font-size:11.2px;line-height:14.56px;color:#333;">Embroidery</div>
<div class="cb" style="left:253px;top:691px;width:16px;height:16px;"></div>
<div class="t" style="left:277px;top:692.84px;font-size:11.1px;line-height:14.43px;color:#333;">Heat Press</div>
<div class="t" style="left:14.5px;top:735.94px;font-size:10.9px;line-height:14.17px;color:#666;">Ink Type</div>
<div class="grp" style="left:14.5px;top:757.5px;width:334.1px;height:35.0px;"></div>
<div style="left:24px;top:766px;width:17px;height:17px;border:2px solid #3a96dc;border-radius:2px;background:#fff"></div><svg style="left:24px;top:766px" width="17" height="17" viewBox="0 0 17 17"><path d="M4.2 8.6 L7.1 11.3 L12.6 5.8" fill="none" stroke="#2f8ad6" stroke-width="2.1"/></svg>
<div class="t" style="left:48.6px;top:766.84px;font-size:11.2px;line-height:14.56px;color:#333;">Water-based</div>
<div class="cb" style="left:136px;top:766.5px;width:16px;height:16.0px;"></div>
<div class="t" style="left:159.6px;top:766.84px;font-size:11.2px;line-height:14.56px;color:#333;">Plastisol</div>
<div class="cb" style="left:225px;top:766.5px;width:16px;height:16.0px;"></div>
<div class="t" style="left:248.4px;top:766.84px;font-size:11.2px;line-height:14.56px;color:#333;">Vintage Plastisol</div>
<div class="t" style="left:361.7px;top:735.94px;font-size:10.9px;line-height:14.17px;color:#666;">Color Change <span style="color:#e0443a">*</span></div>
<div class="grp" style="left:361.7px;top:757px;width:178.90000000000003px;height:35.60000000000002px;"></div>
<div class="rd" style="left:371.6px;top:766px;width:16.5px;height:16.5px"></div>
<div class="t" style="left:396px;top:766.84px;font-size:11.2px;line-height:14.56px;color:#333;">Yes</div>
<div class="rd" style="left:436px;top:766px;width:16.5px;height:16.5px"></div>
<div class="dot" style="left:439px;top:769px;width:10.5px;height:10.5px"></div>
<div class="t" style="left:460px;top:766.84px;font-size:11.2px;line-height:14.56px;color:#333;">No</div>
<div class="t" style="left:553.5px;top:735.94px;font-size:10.9px;line-height:14.17px;color:#666;">Brand Tags <span style="color:#e0443a">*</span></div>
<div class="grp" style="left:553.5px;top:757px;width:153.29999999999995px;height:35.60000000000002px;"></div>
<div class="rd" style="left:563.4px;top:766px;width:16.5px;height:16.5px"></div>
<div class="dot" style="left:566.4px;top:769px;width:10.5px;height:10.5px"></div>
<div class="t" style="left:587.4px;top:766.84px;font-size:11.2px;line-height:14.56px;color:#333;">Yes</div>
<div class="rd" style="left:627.5px;top:766px;width:16.5px;height:16.5px"></div>
<div class="t" style="left:651.6px;top:766.84px;font-size:11.2px;line-height:14.56px;color:#333;">No</div>
<div class="t" style="left:719.5px;top:735.94px;font-size:10.9px;line-height:14.17px;color:#666;">Pantone Color Match(es) <span style="color:#e0443a">*</span></div>
<div class="grp" style="left:719.5px;top:757.5px;width:153.0px;height:35.0px;"></div>
<div class="rd" style="left:729px;top:766px;width:16.5px;height:16.5px"></div>
<div class="dot" style="left:732px;top:769px;width:10.5px;height:10.5px"></div>
<div class="t" style="left:753.4px;top:766.84px;font-size:11.2px;line-height:14.56px;color:#333;">Yes</div>
<div class="rd" style="left:793.6px;top:766px;width:16.5px;height:16.5px"></div>
<div class="t" style="left:817.6px;top:766.84px;font-size:11.2px;line-height:14.56px;color:#333;">No</div>
<div class="t" style="left:885.4px;top:735.94px;font-size:10.9px;line-height:14.17px;color:#666;">Total Pantone Color Matches</div>
<div class="inp" style="left:885.4px;top:757.2px;width:156.60000000000002px;height:32.59999999999991px;"></div>
<div class="t" style="right:166.5px;top:766.94px;font-size:10.9px;line-height:14.17px;color:#555;text-align:right;">1</div>
<div class="t" style="left:14.5px;top:810.44px;font-size:10.9px;line-height:14.17px;color:#666;">Tag Ink Color(s)</div>
<div class="inp" style="left:14.3px;top:832px;width:148.1px;height:88.39999999999998px;"></div>
<div class="t" style="left:28px;top:839.84px;font-size:10.9px;line-height:14.17px;color:#666;">Cool Gray 1 C</div>
<div class="t" style="left:28px;top:859.19px;font-size:10.9px;line-height:14.17px;color:#666;">Cool Gray 6 C</div>
<div class="t" style="left:28px;top:897.89px;font-size:10.9px;line-height:14.17px;color:#666;">Other</div>
<div class="t" style="left:41px;top:878.54px;font-size:10.9px;line-height:14.17px;color:#3a96dc;">Cool Gray 11 C</div>
<svg style="left:28px;top:880px" width="11" height="10" viewBox="0 0 11 10"><path d="M1.2 5 L4 7.8 L9.8 1.8" fill="none" stroke="#2a86d4" stroke-width="2"/></svg>
<div class="t" style="left:14.3px;top:938.14px;font-size:10.9px;line-height:14.17px;color:#666;">First Water-based Print Location</div>
<div class="sel" style="left:14.3px;top:960.2px;width:172.1px;height:32.5px;"></div>
<div class="t" style="left:34.8px;top:969.79px;font-size:11.25px;line-height:14.62px;color:#3a8fd6;">Front: Standard</div>
<svg style="left:165px;top:972.5px" width="12" height="7" viewBox="0 0 12 7"><path d="M0.7 0.6 L5.8 5.9 L10.9 0.6" fill="none" stroke="#3a8fd6" stroke-width="1.1"/></svg>
<div class="t" style="left:199.6px;top:938.14px;font-size:10.9px;line-height:14.17px;color:#666;">Specific Placement</div>
<div class="inp" style="left:199.7px;top:960.2px;width:112.30000000000001px;height:32.5px;"></div>
<div class="t" style="left:325px;top:938.14px;font-size:10.9px;line-height:14.17px;color:#666;"># of Ink Colors</div>
<div class="sel" style="left:325px;top:960.2px;width:93.30000000000001px;height:32.5px;"></div>
<div class="t" style="left:344.8px;top:969.79px;font-size:11.25px;line-height:14.62px;color:#3a8fd6;">3</div>
<svg style="left:396.5px;top:972.5px" width="12" height="7" viewBox="0 0 12 7"><path d="M0.7 0.6 L5.8 5.9 L10.9 0.6" fill="none" stroke="#3a8fd6" stroke-width="1.1"/></svg>
<div class="t" style="left:431px;top:938.14px;font-size:10.9px;line-height:14.17px;color:#666;">Water-based House Colors</div>
<div class="inp" style="left:431.2px;top:960.3px;width:244.8px;height:107.40000000000009px;"></div>
<div class="t" style="left:444.5px;top:968.14px;font-size:10.9px;line-height:14.17px;color:#666;">White</div>
<div class="t" style="left:444.5px;top:987.44px;font-size:10.9px;line-height:14.17px;color:#666;">Black</div>
<div class="t" style="left:444.5px;top:1006.74px;font-size:10.9px;line-height:14.17px;color:#666;">182 U Blush</div>
<div class="t" style="left:444.5px;top:1026.04px;font-size:10.9px;line-height:14.17px;color:#666;">177 U Salmon</div>
<div class="t" style="left:444.5px;top:1045.34px;font-size:10.9px;line-height:14.17px;color:#666;">218 U Ribbon Pink</div>
<div class="" style="left:662.7px;top:961.3px;width:12.299999999999955px;height:105.40000000000009px;background:#f1f1f1"></div>
<svg style="left:662px;top:961px" width="14" height="106" viewBox="0 0 14 106"><path d="M3.6 9 L6.9 4.8 L10.2 9 Z" fill="#a0a0a0"/><rect x="1.4" y="13.3" width="10.4" height="12.9" fill="#c0c0c0"/><path d="M3.6 96.9 L6.9 101.3 L10.2 96.9 Z" fill="#333"/></svg>
<div class="t" style="left:687px;top:938.14px;font-size:10.9px;line-height:14.17px;color:#666;">Pantone Color Matches/Specialty Ink(s)</div>
<div class="inp" style="left:687.4px;top:960.2px;width:207.20000000000005px;height:97.29999999999995px;"></div>
<div class="t" style="left:694px;top:968.34px;font-size:11.1px;line-height:14.43px;color:#333;">353 U Green</div>
<svg style="left:885px;top:1047.5px" width="8" height="8" viewBox="0 0 8 8"><g fill="#959ba3"><rect x="6" y="0" width="1" height="1"/><rect x="3" y="3" width="1" height="1"/><rect x="6" y="3" width="1" height="1"/><rect x="0" y="6" width="1" height="1"/><rect x="3" y="6" width="1" height="1"/><rect x="6" y="6" width="1" height="1"/></g></svg>
<div class="t" style="left:908px;top:938.14px;font-size:10.9px;line-height:14.17px;color:#666;">Notes - List Color Changes Here (123 U Yellow &gt; Black)</div>
<div class="inp" style="left:908.2px;top:960.2px;width:281.29999999999995px;height:97.29999999999995px;"></div>
<svg style="left:1180px;top:1047.5px" width="8" height="8" viewBox="0 0 8 8"><g fill="#959ba3"><rect x="6" y="0" width="1" height="1"/><rect x="3" y="3" width="1" height="1"/><rect x="6" y="3" width="1" height="1"/><rect x="0" y="6" width="1" height="1"/><rect x="3" y="6" width="1" height="1"/><rect x="6" y="6" width="1" height="1"/></g></svg>
</body></html>
